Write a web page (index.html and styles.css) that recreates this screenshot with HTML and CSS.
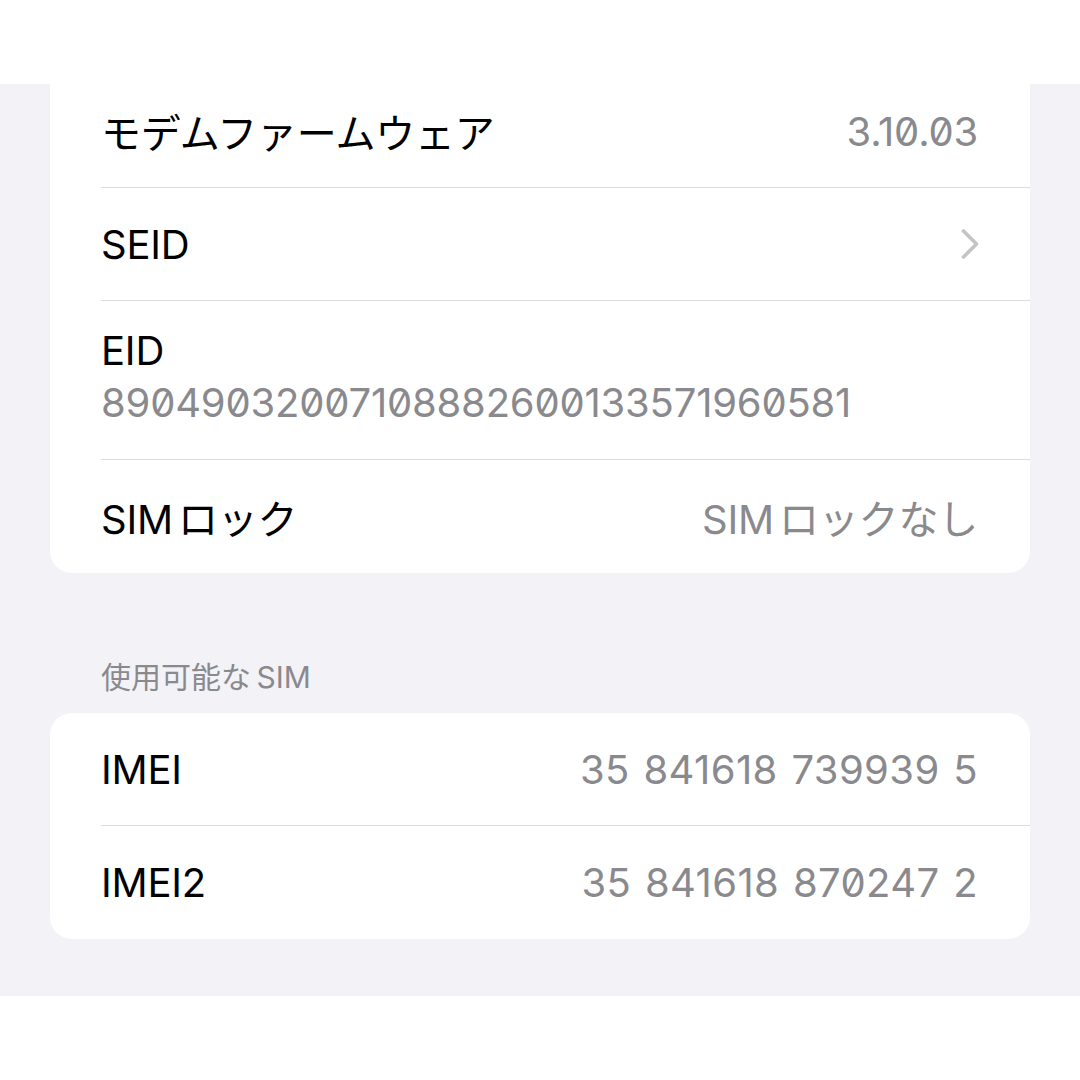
FILE: index.html
```html
<!DOCTYPE html>
<html lang="ja">
<head>
  <meta charset="UTF-8">
  <title>情報</title>
  <meta name="viewport" content="width=device-width, initial-scale=1.0">
  <link rel="stylesheet" href="styles.css">
</head>
<body>

  <div class="top-strip"></div>

  <div class="settings">

    <div class="group group-cut">
      <div class="row row-first">
        <span class="label">モデムファームウェア</span>
        <span class="value">3.10.03</span>
      </div>
      <div class="row">
        <span class="label">SEID</span>
        <svg class="chevron" width="20" height="32" viewBox="0 0 20 32">
          <path d="M3.5 3 L16.5 16 L3.5 29" fill="none" stroke="#c4c4c7" stroke-width="3.6" stroke-linecap="round" stroke-linejoin="round"/>
        </svg>
      </div>
      <div class="row row-stack">
        <span class="label">EID</span>
        <span class="value">89049032007108882600133571960581</span>
      </div>
      <div class="row">
        <span class="label tight">SIM ロック</span>
        <span class="value tight">SIM ロックなし</span>
      </div>
    </div>

    <p class="group-title">使用可能な SIM</p>

    <div class="group">
      <div class="row">
        <span class="label">IMEI</span>
        <span class="value imei">35 841618 739939 5</span>
      </div>
      <div class="row">
        <span class="label">IMEI2</span>
        <span class="value imei">35 841618 870247 2</span>
      </div>
    </div>

  </div>

</body>
</html>
```

FILE: styles.css
```css
:root {
  --page-bg: #f2f2f7;
  --card-bg: #ffffff;
  --text: #000000;
  --muted: #8a8a8e;
  --line: #dcdcdf;
}

body {
  margin: 0;
  background: #ffffff;
  font-family: Inter, "Noto Sans CJK JP", sans-serif;
  color: var(--text);
}

.top-strip {
  height: 84px;
}

.settings {
  background: var(--page-bg);
  padding: 0 50px 57px;
}

.group {
  background: var(--card-bg);
  border-radius: 22px;
  overflow: hidden;
}

.group-cut {
  border-radius: 0 0 22px 22px;
}

.row {
  display: flex;
  align-items: center;
  justify-content: space-between;
  height: 112px;
  margin-left: 51px;
  padding-right: 52px;
  border-bottom: 1px solid var(--line);
  font-size: 40px;
}

.row:last-child {
  border-bottom: none;
  height: 113px;
}

.row-first {
  height: 94px;
  padding-bottom: 9px;
}

.row-stack {
  flex-direction: column;
  align-items: flex-start;
  justify-content: flex-start;
  height: auto;
  padding-top: 26px;
  padding-bottom: 32px;
  gap: 4px;
}

.row-stack .label,
.row-stack .value {
  line-height: 48px;
}

.label {
  letter-spacing: -0.2px;
}

.value {
  color: var(--muted);
  font-feature-settings: "zero";
  letter-spacing: -0.2px;
}

.imei {
  letter-spacing: 0.4px;
  word-spacing: 2px;
}

.tight {
  word-spacing: -6px;
}

.chevron {
  margin-right: -2px;
}

.group-title {
  margin: 86px 0 18px 51px;
  font-size: 30px;
  line-height: 36px;
  color: var(--muted);
  word-spacing: -3px;
}
```
